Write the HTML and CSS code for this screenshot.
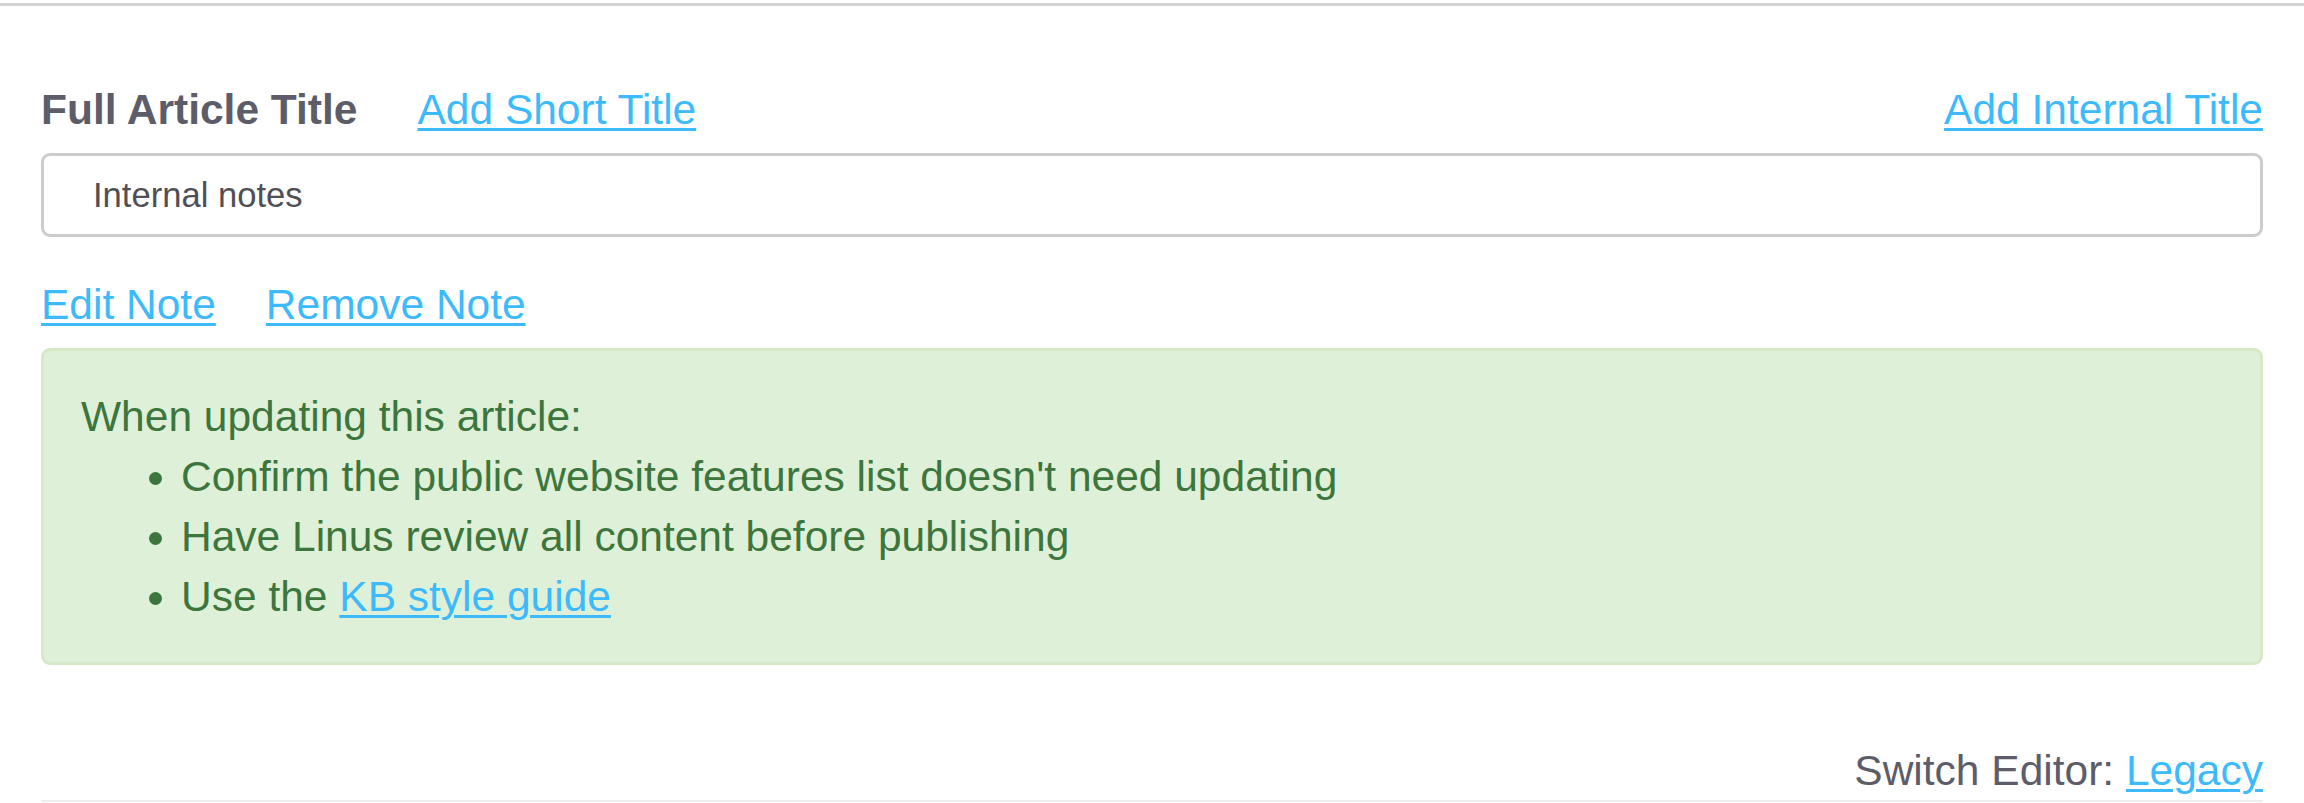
FILE: index.html
```html
<!DOCTYPE html>
<html lang="en">
<head>
<meta charset="utf-8">
<title>Article Editor</title>
<link rel="stylesheet" href="styles.css">
</head>
<body>
<div class="topline"></div>
<main class="editor">
  <div class="title-row">
    <span class="label">Full Article Title</span>
    <a href="#" class="link">Add Short Title</a>
    <a href="#" class="link push">Add Internal Title</a>
  </div>
  <div class="input">Internal notes</div>
  <div class="note-actions">
    <a href="#" class="link">Edit Note</a>
    <a href="#" class="link">Remove Note</a>
  </div>
  <div class="alert">
    <div>When updating this article:</div>
    <ul class="alert-list">
      <li>Confirm the public website features list doesn't need updating</li>
      <li>Have Linus review all content before publishing</li>
      <li>Use the <a href="#" class="link">KB style guide</a></li>
    </ul>
  </div>
  <div class="switch">Switch Editor: <a href="#" class="link">Legacy</a></div>
</main>
</body>
</html>
```
FILE: styles.css
```css
html, body {
  margin: 0;
  padding: 0;
  background: #ffffff;
}
body {
  font-family: "Liberation Sans", Arial, sans-serif;
  font-size: 42.5px;
  line-height: 60px;
  color: #5c5d68;
}
.topline {
  margin-top: 3px;
  height: 3px;
  background: #d2d2d2;
}
.editor {
  padding: 0 41px;
}
.link {
  color: #3cbafc;
  text-decoration: underline;
  text-decoration-thickness: 3px;
  text-underline-offset: 4px;
}
.title-row {
  display: flex;
  align-items: center;
  gap: 60px;
  margin-top: 74px;
}
.label {
  font-weight: bold;
}
.push {
  margin-left: auto;
}
.input {
  margin-top: 13px;
  height: 84px;
  box-sizing: border-box;
  border: 3px solid #cccccc;
  border-radius: 9px;
  padding-left: 49px;
  font-size: 34.6px;
  line-height: 78px;
  color: #4f4f55;
}
.note-actions {
  display: flex;
  gap: 50px;
  margin-top: 38px;
}
.alert {
  margin-top: 13px;
  background: #dff0d8;
  border: 3px solid #d6e9c6;
  border-radius: 9px;
  padding: 36px 37px 35px;
  color: #3c763d;
}
.alert-list {
  margin: 0;
  padding-left: 100px;
}
.switch {
  margin-top: 76px;
  text-align: right;
  border-bottom: 2px solid #eeeeee;
  height: 59px;
}
```
